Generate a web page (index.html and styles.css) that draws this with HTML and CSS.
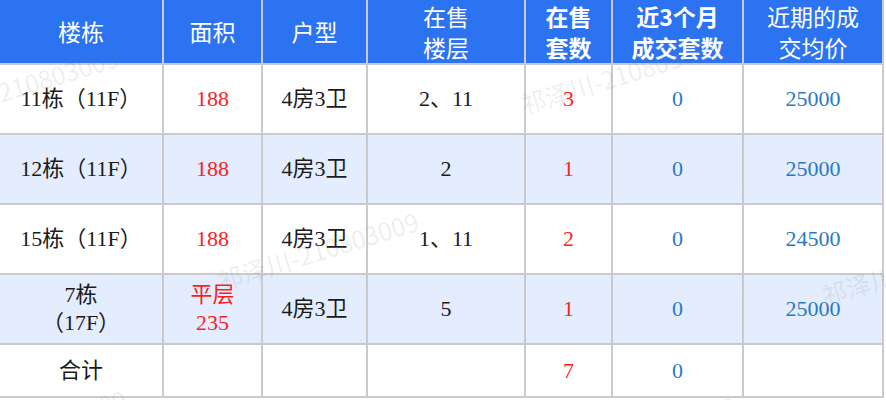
FILE: index.html
```html
<!DOCTYPE html>
<html lang="zh">
<head>
<meta charset="utf-8">
<title>楼栋</title>
<link rel="stylesheet" href="styles.css">
</head>
<body>
<div class="page">
  <div class="grid">
    <div class="th">楼栋</div>
    <div class="th">面积</div>
    <div class="th">户型</div>
    <div class="th">在售<br>楼层</div>
    <div class="th bold">在售<br>套数</div>
    <div class="th bold">近3个月<br>成交套数</div>
    <div class="th">近期的成<br>交均价</div>

    <div class="td">11栋（11F）</div>
    <div class="td red">188</div>
    <div class="td">4房3卫</div>
    <div class="td">2、11</div>
    <div class="td red">3</div>
    <div class="td blue">0</div>
    <div class="td blue">25000</div>

    <div class="td alt">12栋（11F）</div>
    <div class="td alt red">188</div>
    <div class="td alt">4房3卫</div>
    <div class="td alt">2</div>
    <div class="td alt red">1</div>
    <div class="td alt blue">0</div>
    <div class="td alt blue">25000</div>

    <div class="td">15栋（11F）</div>
    <div class="td red">188</div>
    <div class="td">4房3卫</div>
    <div class="td">1、11</div>
    <div class="td red">2</div>
    <div class="td blue">0</div>
    <div class="td blue">24500</div>

    <div class="td alt two">7栋<br>（17F）</div>
    <div class="td alt red two">平层<br>235</div>
    <div class="td alt">4房3卫</div>
    <div class="td alt">5</div>
    <div class="td alt red">1</div>
    <div class="td alt blue">0</div>
    <div class="td alt blue">25000</div>

    <div class="td">合计</div>
    <div class="td"></div>
    <div class="td"></div>
    <div class="td"></div>
    <div class="td red">7</div>
    <div class="td blue">0</div>
    <div class="td"></div>
  </div>

  <div class="wm wm1">祁泽川-210803009</div>
  <div class="wm wm2">祁泽川-210803009</div>
  <div class="wm wm3">祁泽川-210803009</div>
  <div class="wm wm4">祁泽川-210803009</div>
  <div class="wm wm5">祁泽川-210803009</div>
  <div class="wm wm6">祁泽川-210803009</div>
</div>
</body>
</html>
```

FILE: styles.css
```css
html, body {
  margin: 0;
  padding: 0;
  background: #ffffff;
}

.page {
  position: relative;
  width: 886px;
  height: 400px;
  overflow: hidden;
}

.grid {
  display: grid;
  grid-template-columns: 162px 97px 103px 156px 85px 129px 138px;
  grid-template-rows: 63px 68px 68px 68px 68px 51px;
  gap: 2px;
  padding: 0 2px 2px 0;
  background: #cacace;
  width: fit-content;
}

.th {
  background: #2b73f0;
  color: #ffffff;
  font-family: "Noto Sans CJK SC", "Noto Sans", sans-serif;
  font-size: 23px;
  line-height: 31px;
  display: flex;
  align-items: center;
  justify-content: center;
  text-align: center;
}

.th.bold {
  font-weight: 700;
}

.td {
  background: #ffffff;
  color: #1b1b1b;
  font-family: "Liberation Serif", "Noto Sans CJK SC", serif;
  font-size: 22px;
  line-height: 30px;
  display: flex;
  align-items: center;
  justify-content: center;
  text-align: center;
}

.td.two {
  line-height: 28px;
}

.td.alt {
  background: #e3edfd;
}

.red {
  color: #fb1e1e;
}

.blue {
  color: #2a79c6;
}

.wm {
  position: absolute;
  font-family: "Noto Sans CJK SC", "Noto Sans", sans-serif;
  font-size: 25px;
  line-height: 25px;
  color: rgba(120, 120, 120, 0.13);
  white-space: nowrap;
  transform-origin: left bottom;
  transform: rotate(-17deg);
  pointer-events: none;
}

.wm1 { left: -78px; top: 104px; }
.wm2 { left: 525px; top: 92px; }
.wm3 { left: 222px; top: 268px; }
.wm4 { left: 826px; top: 283px; }
.wm5 { left: -70px; top: 446px; }
.wm6 { left: 540px; top: 452px; }
```
